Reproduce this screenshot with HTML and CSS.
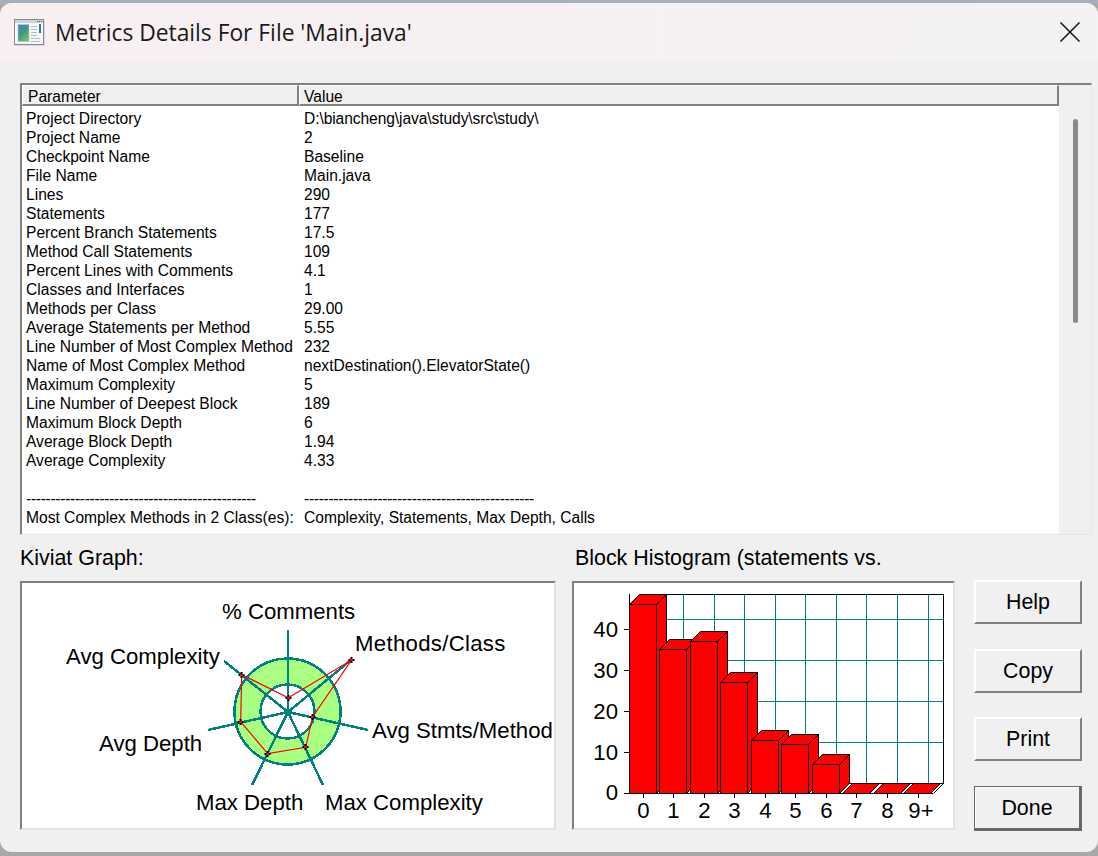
FILE: index.html
```html
<!DOCTYPE html>
<html lang="en">
<head>
<meta charset="utf-8">
<title>Metrics Details For File 'Main.java'</title>
<link rel="stylesheet" href="styles.css">
</head>
<body>
<main class="window">
  <header class="titlebar">
    <svg class="app-icon" width="31" height="27" viewBox="0 0 31 27">
      <defs><linearGradient id="ig" x1="0" y1="0" x2="0.6" y2="1"><stop offset="0" stop-color="#3f7fbe"/><stop offset="0.55" stop-color="#3f9a84"/><stop offset="1" stop-color="#74b86a"/></linearGradient></defs>
      <rect x="1" y="1" width="30" height="26" fill="#d5d7da"/>
      <rect x="0.500" y="0.500" width="29" height="25" fill="#f6f7f8" stroke="#858b92"/>
      <rect x="1" y="1" width="28" height="3" fill="#cfd4da"/>
      <path d="M23 2.500h1M25 2.500h1M27 2.500h1" stroke="#555" stroke-width="1"/>
      <rect x="4" y="5.500" width="11" height="17" fill="url(#ig)" stroke="#c2ccd4" stroke-width="0.500"/>
      <path d="M17 7.500h6M17 10.500h6M17 13.500h6M17 16.500h6M17 19.500h9M17 22.500h9" stroke="#b4bac0" stroke-width="1"/>
      <rect x="25" y="5" width="2" height="9" fill="#2c7f86"/>
    </svg>
    <h1 class="title">Metrics Details For File 'Main.java'</h1>
    <svg class="close" width="22" height="22" viewBox="0 0 22 22"><path d="M1.500 1.500l19 19M20.500 1.500l-19 19" stroke="#1a1a1a" stroke-width="1.600" fill="none"/></svg>
  </header>
  <div class="content">
    <section class="frame">
      <div class="listview">
        <div class="list-head"><div class="hcell hcell-param">Parameter</div><div class="hcell hcell-value">Value</div></div>
        <div class="rows">
          <div class="row"><span>Project Directory</span><span class="path">D:\biancheng\java\study\src\study\</span></div>
          <div class="row"><span>Project Name</span><span>2</span></div>
          <div class="row"><span>Checkpoint Name</span><span>Baseline</span></div>
          <div class="row"><span>File Name</span><span>Main.java</span></div>
          <div class="row"><span>Lines</span><span>290</span></div>
          <div class="row"><span>Statements</span><span>177</span></div>
          <div class="row"><span>Percent Branch Statements</span><span>17.5</span></div>
          <div class="row"><span>Method Call Statements</span><span>109</span></div>
          <div class="row"><span>Percent Lines with Comments</span><span>4.1</span></div>
          <div class="row"><span>Classes and Interfaces</span><span>1</span></div>
          <div class="row"><span>Methods per Class</span><span>29.00</span></div>
          <div class="row"><span>Average Statements per Method</span><span>5.55</span></div>
          <div class="row"><span>Line Number of Most Complex Method</span><span>232</span></div>
          <div class="row"><span>Name of Most Complex Method</span><span>nextDestination().ElevatorState()</span></div>
          <div class="row"><span>Maximum Complexity</span><span>5</span></div>
          <div class="row"><span>Line Number of Deepest Block</span><span>189</span></div>
          <div class="row"><span>Maximum Block Depth</span><span>6</span></div>
          <div class="row"><span>Average Block Depth</span><span>1.94</span></div>
          <div class="row"><span>Average Complexity</span><span>4.33</span></div>
          <div class="row"><span>&nbsp;</span><span></span></div>
          <div class="row"><span class="dashes">-----------------------------------------------</span><span class="dashes">-----------------------------------------------</span></div>
          <div class="row"><span>Most Complex Methods in 2 Class(es):</span><span>Complexity, Statements, Max Depth, Calls</span></div>
        </div>
      </div>
      <div class="scrollbar"><div class="thumb"></div></div>
    </section>
    <section class="lower">
      <div class="kiviat-col">
        <h2 class="caption">Kiviat Graph:</h2>
        <div class="panel">
          <svg class="chart" width="532" height="245" viewBox="22 582 532 245">
            <g shape-rendering="crispEdges">
              <circle cx="287.500" cy="710.500" r="53" fill="#a8ff80" stroke="#008080" stroke-width="2.500"/>
              <circle cx="287.500" cy="710.500" r="27" fill="#fff" stroke="#008080" stroke-width="2.500"/>
              <path d="M288 711L288 629M288 711L351 659M288 711L368 729M288 711L323 784M288 711L252 784M288 711L208 729M288 711L224 660" stroke="#008080" stroke-width="2.500" fill="none"/>
            </g>
            <polygon points="288.300,696.700 351.300,659.300 312.700,715.700 305.700,746.300 267.700,752.700 240.700,720.700 241.700,673.700" fill="none" stroke="#ff0000" stroke-width="1.200"/>
            <g class="marks">
              <path d="M288.500 694v6M285.500 697h6M351.500 656v6M348.500 659h6M312.500 713v6M309.500 716h6M305.500 743v6M302.500 746h6M267.500 750v6M264.500 753h6M240.500 718v6M237.500 721h6M241.500 671v6M238.500 674h6"/>
            </g>
            <g fill="#ff0000">
              <rect x="287" y="696" width="3" height="2"/><rect x="350" y="658" width="3" height="2"/><rect x="311" y="715" width="3" height="2"/><rect x="304" y="745" width="3" height="2"/><rect x="266" y="752" width="3" height="2"/><rect x="239" y="720" width="3" height="2"/><rect x="240" y="673" width="3" height="2"/>
            </g>
            <g class="chart-label">
              <text x="222" y="618">% Comments</text>
              <text class="label-wide" x="355" y="650">Methods/Class</text>
              <text x="66" y="663">Avg Complexity</text>
              <text x="372" y="737">Avg Stmts/Method</text>
              <text x="99" y="750">Avg Depth</text>
              <text x="196" y="809">Max Depth</text>
              <text x="325" y="809">Max Complexity</text>
            </g>
          </svg>
        </div>
      </div>
      <div class="hist-col">
        <h2 class="caption caption-hist">Block Histogram (statements vs.</h2>
        <div class="panel">
          <svg class="chart" width="379" height="245" viewBox="574 582 379 245">
            <g shape-rendering="crispEdges">
              <path d="M683.500 593V782M714.500 593V782M744.500 593V782M775.500 593V782M805.500 593V782M836.500 593V782M866.500 593V782M897.500 593V782M928.500 593V782M639 618.500H943M639 659.500H943M639 700.500H943M639 741.500H943" stroke="#008080" stroke-width="1" fill="none"/>
              <path d="M639.500 593.500H943.500V782.500H639.500M639.500 782.500H943.500" stroke="#000" fill="none"/>
              <path d="M629 792.500H933M629.500 593V792M624 628.500H629M624 669.500H629M624 710.500H629M624 751.500H629M624 792.500H629M643.500 792V797M673.500 792V797M704.500 792V797M734.500 792V797M765.500 792V797M795.500 792V797M826.500 792V797M856.500 792V797M887.500 792V797M918.500 792V797" stroke="#000" fill="none"/>
            </g>
            <path d="M943.500 782.500L933.500 792.500" stroke="#000" fill="none"/>
            <g fill="#ff0000" stroke="#000" stroke-width="1" stroke-linejoin="miter">
              <path d="M629.500 603.500l10-10h27l-10 10zM656.500 603.500l10-10V782l-10 10.500z"/><rect x="629.500" y="603.500" width="27" height="189"/>
              <path d="M659.500 648.500l10-10h27l-10 10zM686.500 648.500l10-10V782l-10 10.500z"/><rect x="659.500" y="648.500" width="27" height="144"/>
              <path d="M690.500 640.500l10-10h27l-10 10zM717.500 640.500l10-10V782l-10 10.500z"/><rect x="690.500" y="640.500" width="27" height="152"/>
              <path d="M720.500 681.500l10-10h27l-10 10zM747.500 681.500l10-10V782l-10 10.500z"/><rect x="720.500" y="681.500" width="27" height="111"/>
              <path d="M751.500 739.500l10-10h27l-10 10zM778.500 739.500l10-10V782l-10 10.500z"/><rect x="751.500" y="739.500" width="27" height="53"/>
              <path d="M781.500 743.500l10-10h27l-10 10zM808.500 743.500l10-10V782l-10 10.500z"/><rect x="781.500" y="743.500" width="27" height="49"/>
              <path d="M812.500 763.500l10-10h27l-10 10zM839.500 763.500l10-10V782l-10 10.500z"/><rect x="812.500" y="763.500" width="27" height="29"/>
              <path d="M842.500 792.500l10-10h27l-10 10z"/>
              <path d="M873.500 792.500l10-10h27l-10 10z"/>
              <path d="M903.500 792.500l10-10h27l-10 10z"/>
            </g>
            <g class="chart-label">
              <g text-anchor="end">
                <text x="618" y="636">40</text><text x="618" y="677">30</text><text x="618" y="718">20</text><text x="618" y="759">10</text><text x="618" y="799">0</text>
              </g>
              <g text-anchor="middle">
                <text x="643.500" y="817">0</text><text x="673.500" y="817">1</text><text x="704.500" y="817">2</text><text x="734.500" y="817">3</text><text x="765.500" y="817">4</text><text x="795.500" y="817">5</text><text x="826.500" y="817">6</text><text x="856.500" y="817">7</text><text x="887.500" y="817">8</text><text x="921" y="817">9+</text>
              </g>
            </g>
          </svg>
        </div>
      </div>
      <div class="buttons">
        <button class="btn">Help</button>
        <button class="btn btn-copy">Copy</button>
        <button class="btn">Print</button>
        <button class="btn btn-default">Done</button>
      </div>
    </section>
  </div>
</main>
</body>
</html>
```
FILE: styles.css
```css
* { box-sizing: border-box; }
html, body { margin: 0; height: 100%; }
body {
  width: 1098px;
  height: 856px;
  overflow: hidden;
  background: linear-gradient(#a6afba 0, #a6afba 4px, #a8a8a8 5px);
}
.window {
  height: 849px;
  margin-top: 3px;
  background: #f0f0f0;
  border-radius: 12px;
  display: flex;
  flex-direction: column;
  font-family: "Liberation Sans", Arial, sans-serif;
  color: #000;
  overflow: hidden;
}
.titlebar {
  flex: none;
  height: 58px;
  background: linear-gradient(90deg, #f8eff1 0, #f6f1f3 60%, #f4f2f3 100%);
  display: flex;
  align-items: center;
  padding: 0 17px 0 14px;
}
.app-icon { flex: none; margin-right: 10px; }
.title {
  flex: 1;
  margin: 0;
  font: 400 22.800px "Open Sans", sans-serif;
  color: #1a1a1a;
}
.close { flex: none; }
.content {
  flex: 1;
  padding: 22px 6px 0 20px;
  display: flex;
  flex-direction: column;
}
.frame {
  flex: none;
  height: 452px;
  display: flex;
  border-top: 2px solid #808080;
  border-left: 1px solid #808080;
  border-right: 1px solid #e6e6e6;
  border-bottom: 1px solid #e6e6e6;
}
.listview {
  flex: none;
  width: 1038px;
  display: flex;
  flex-direction: column;
  background: #fff;
  border-left: 1px solid #808080;
}
.list-head {
  flex: none;
  height: 21px;
  display: flex;
  background: #f0f0f0;
  font-size: 15.600px;
}
.hcell {
  border-top: 1px solid #fff;
  border-left: 1px solid #fff;
  border-right: 2px solid #808080;
  border-bottom: 2px solid #808080;
  padding-left: 5px;
  line-height: 21px;
}
.hcell-param { width: 277px; }
.hcell-value { flex: 1; padding-left: 4px; }
.rows {
  flex: 1;
  padding: 3px 0 0 4px;
  font-size: 15.600px;
  overflow: hidden;
}
.row {
  display: grid;
  grid-template-columns: 278px 1fr;
  height: 19px;
  line-height: 19px;
  white-space: nowrap;
}
.dashes { letter-spacing: -0.300px; }
.path { letter-spacing: -0.090px; }
.scrollbar {
  flex: 1;
  background: #f0f0f0;
  padding: 34px 0 0 14px;
}
.thumb {
  width: 5px;
  height: 204px;
  border-radius: 3px;
  background: #8a8a8a;
}
.lower {
  flex: none;
  display: flex;
  align-items: flex-start;
  margin-top: 9px;
}
.kiviat-col { width: 536px; margin-right: 16px; }
.hist-col { width: 383px; margin-right: 19px; }
.caption {
  margin: 0;
  height: 37px;
  font-size: 21.400px;
  font-weight: 400;
  line-height: 28px;
  white-space: nowrap;
}
.caption-hist { padding-left: 3px; }
.panel {
  height: 249px;
  background: #fff;
  border-top: 2px solid #808080;
  border-left: 2px solid #808080;
  border-right: 2px solid #e3e3e3;
  border-bottom: 2px solid #e3e3e3;
}
.chart { display: block; }
.chart-label text {
  font-family: "Liberation Sans", Arial, sans-serif;
  font-size: 22.200px;
  fill: #000;
}
.chart-label .label-wide { letter-spacing: 0.300px; }
.marks path { stroke: #000; stroke-width: 2; fill: none; }
.buttons {
  width: 108px;
  padding-top: 36px;
  display: flex;
  flex-direction: column;
  gap: 24.500px;
}
.btn {
  height: 44px;
  padding: 0;
  font: 400 21.400px "Liberation Sans", Arial, sans-serif;
  color: #000;
  background: #f0f0f0;
  border-top: 2px solid #fff;
  border-left: 2px solid #fff;
  border-right: 2px solid #808080;
  border-bottom: 2px solid #808080;
}
.btn-copy { padding-top: 2px; }
.btn-default {
  height: 45px;
  padding-top: 3px;
  border: 1px solid #696969;
  border-right-width: 3px;
  border-bottom-width: 3px;
  box-shadow: inset 1px 1px 0 #fff;
}
```
